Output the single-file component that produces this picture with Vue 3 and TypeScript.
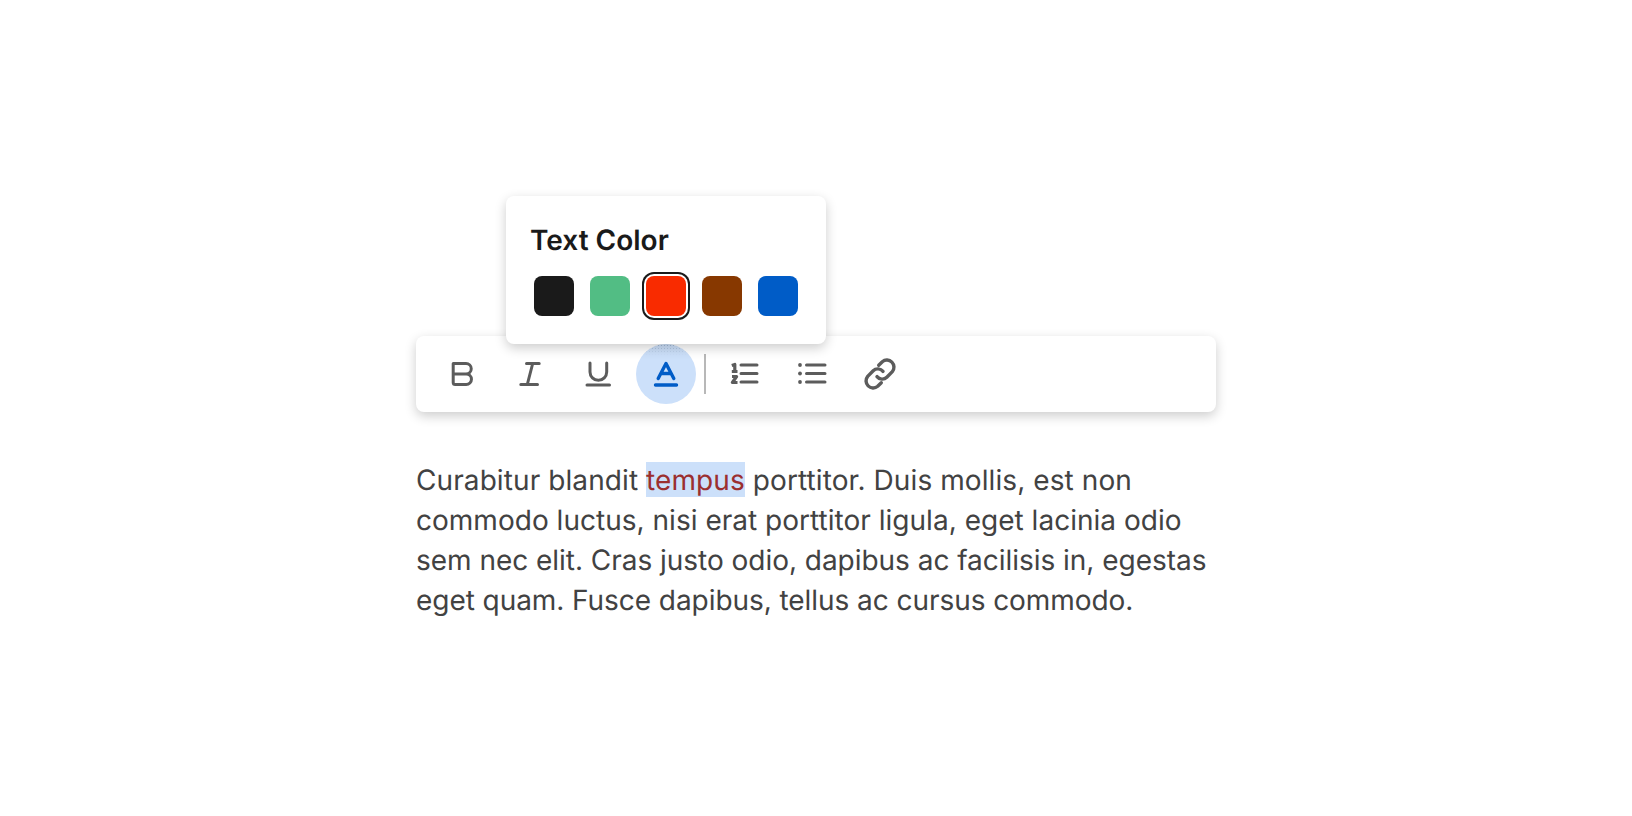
<script setup lang="ts">
const swatches: { color: string; selected?: boolean }[] = [
  { color: '#1a1a1a' },
  { color: '#52bd84' },
  { color: '#f92b00', selected: true },
  { color: '#873800' },
  { color: '#005cc7' },
]
</script>

<template>
  <div class="page">
    <div class="editor">
      <div class="toolbar">
        <button class="tool">
          <svg width="32" height="32" viewBox="0 0 32 32" fill="none"><path d="M7.2 5.5H20a5.25 5.25 0 0 1 0 10.5H7.2zM7.2 16H20.2a5.25 5.25 0 0 1 0 10.5H9.2a2 2 0 0 1-2-2z" stroke="#5c5c5c" stroke-width="3" stroke-linejoin="round"/></svg>
        </button>
        <button class="tool">
          <svg width="32" height="32" viewBox="0 0 32 32" fill="none"><path d="M12.5 5.5H25.2M6.8 26.5H23.5M18.7 5.5L13.3 26.5" stroke="#5c5c5c" stroke-width="3" stroke-linecap="round"/></svg>
        </button>
        <button class="tool">
          <svg width="32" height="32" viewBox="0 0 32 32" fill="none"><path d="M8 5V14a8.3 8.3 0 0 0 16.7 0V5M5 27H27.5" stroke="#5c5c5c" stroke-width="3" stroke-linecap="round"/></svg>
        </button>
        <button class="tool active">
          <svg width="32" height="32" viewBox="0 0 32 32" fill="none"><path d="M8.2 20.5L16 5.5L23.8 20.5M10.8 15.5H21.2M5.5 27H26.5" stroke="#005cc7" stroke-width="3.4" stroke-linecap="round" stroke-linejoin="round"/></svg>
        </button>
        <span class="divider"></span>
        <button class="tool">
          <svg width="32" height="32" viewBox="0 0 32 32" fill="none"><path d="M13 7H29M13 15.5H29M13 24H29" stroke="#5c5c5c" stroke-width="3" stroke-linecap="round"/><path d="M3.8 7.5L6.8 6.5V13.5M3.8 13.5H9.5M4 18.5H8.6L4.4 24.5H9.5" stroke="#5c5c5c" stroke-width="3.2" stroke-linejoin="round"/></svg>
        </button>
        <button class="tool">
          <svg width="32" height="32" viewBox="0 0 32 32" fill="none"><path d="M10.5 7H29M10.5 15.5H29M10.5 24H29" stroke="#5c5c5c" stroke-width="3" stroke-linecap="round"/><circle cx="4" cy="7" r="1.9" fill="#5c5c5c"/><circle cx="4" cy="15.5" r="1.9" fill="#5c5c5c"/><circle cx="4" cy="24" r="1.9" fill="#5c5c5c"/></svg>
        </button>
        <button class="tool">
          <svg width="32" height="32" viewBox="0 0 32 32" fill="none"><path d="M13 18.6a6.6 6.6 0 0 0 9.8.6l5.5-5.5a7.1 7.1 0 0 0-10-10l-3.6 3.6M19 13.4a6.6 6.6 0 0 0-9.8-.6l-5.5 5.5a7.1 7.1 0 0 0 10 10l3.6-3.6" stroke="#5c5c5c" stroke-width="3.4" stroke-linecap="round"/></svg>
        </button>
      </div>

      <div class="popover">
        <div class="popover-title">Text Color</div>
        <div class="swatches">
          <span
            v-for="s in swatches"
            :key="s.color"
            class="swatch"
            :class="{ selected: s.selected }"
            :style="{ backgroundColor: s.color }"
          ></span>
        </div>
      </div>

      <p class="body-text">
        <span class="line line-1">Curabitur blandit <span class="highlight">tempus</span> porttitor. Duis mollis, est non</span>
        <span class="line line-2">commodo luctus, nisi erat porttitor ligula, eget lacinia odio</span>
        <span class="line line-3">sem nec elit. Cras justo odio, dapibus ac facilisis in, egestas</span>
        <span class="line line-4">eget quam. Fusce dapibus, tellus ac cursus commodo.</span>
      </p>
    </div>
  </div>
</template>

<style>
html, body { margin: 0; background: #fff; }
</style>

<style scoped>
.page {
  display: flex;
  justify-content: center;
  padding-top: 336px;
  font-family: Inter, "Liberation Sans", sans-serif;
  font-optical-sizing: none;
  text-rendering: geometricPrecision;
}
.editor {
  position: relative;
  width: 800px;
}
.toolbar {
  display: flex;
  align-items: center;
  gap: 8px;
  height: 76px;
  padding: 0 16px;
  box-sizing: border-box;
  background: #fff;
  border-radius: 8px;
  box-shadow: 0 4px 12px rgba(0, 0, 0, 0.2);
}
.tool {
  position: relative;
  overflow: hidden;
  width: 60px;
  height: 60px;
  padding: 0;
  border: 0;
  border-radius: 50%;
  background: transparent;
  display: flex;
  align-items: center;
  justify-content: center;
}
.tool.active { background: #cce0fa; }
.tool.active::after {
  content: "";
  position: absolute;
  left: 0;
  right: 0;
  top: 0;
  height: 11px;
  background: radial-gradient(circle, #9db4d2 0.8px, transparent 1px) 0 0 / 3px 3px;
  -webkit-mask-image: linear-gradient(to bottom, #000, transparent);
  mask-image: linear-gradient(to bottom, #000, transparent);
}
.divider {
  width: 2px;
  height: 40px;
  background: #b8b8b8;
}
.popover {
  position: absolute;
  left: 90px;
  top: -140px;
  width: 320px;
  height: 148px;
  box-sizing: border-box;
  padding: 24px 28px 0 24px;
  background: #fff;
  border-radius: 8px;
  box-shadow: 0 4px 12px rgba(0, 0, 0, 0.2);
}
.popover-title {
  font-size: 28px;
  font-weight: 600;
  line-height: 40px;
  color: #1a1a1a;
}
.swatches {
  display: flex;
  gap: 16px;
  margin-top: 16px;
  padding-left: 4px;
}
.swatch {
  width: 40px;
  height: 40px;
  border-radius: 8px;
}
.swatch.selected {
  box-shadow: 0 0 0 2px #fff, 0 0 0 4px #1a1a1a;
}
.body-text {
  margin: 48px 0 0;
  font-size: 28px;
  line-height: 40px;
  color: #424242;
}
.line { display: block; white-space: nowrap; }
.line-1 { letter-spacing: 0.09px; }
.line-2 { letter-spacing: 0.02px; }
.line-3 { letter-spacing: -0.03px; }
.line-4 { letter-spacing: -0.06px; }
.highlight {
  color: #9b2f2f;
  background: #cce0fa;
  padding-top: 1px;
}
</style>
